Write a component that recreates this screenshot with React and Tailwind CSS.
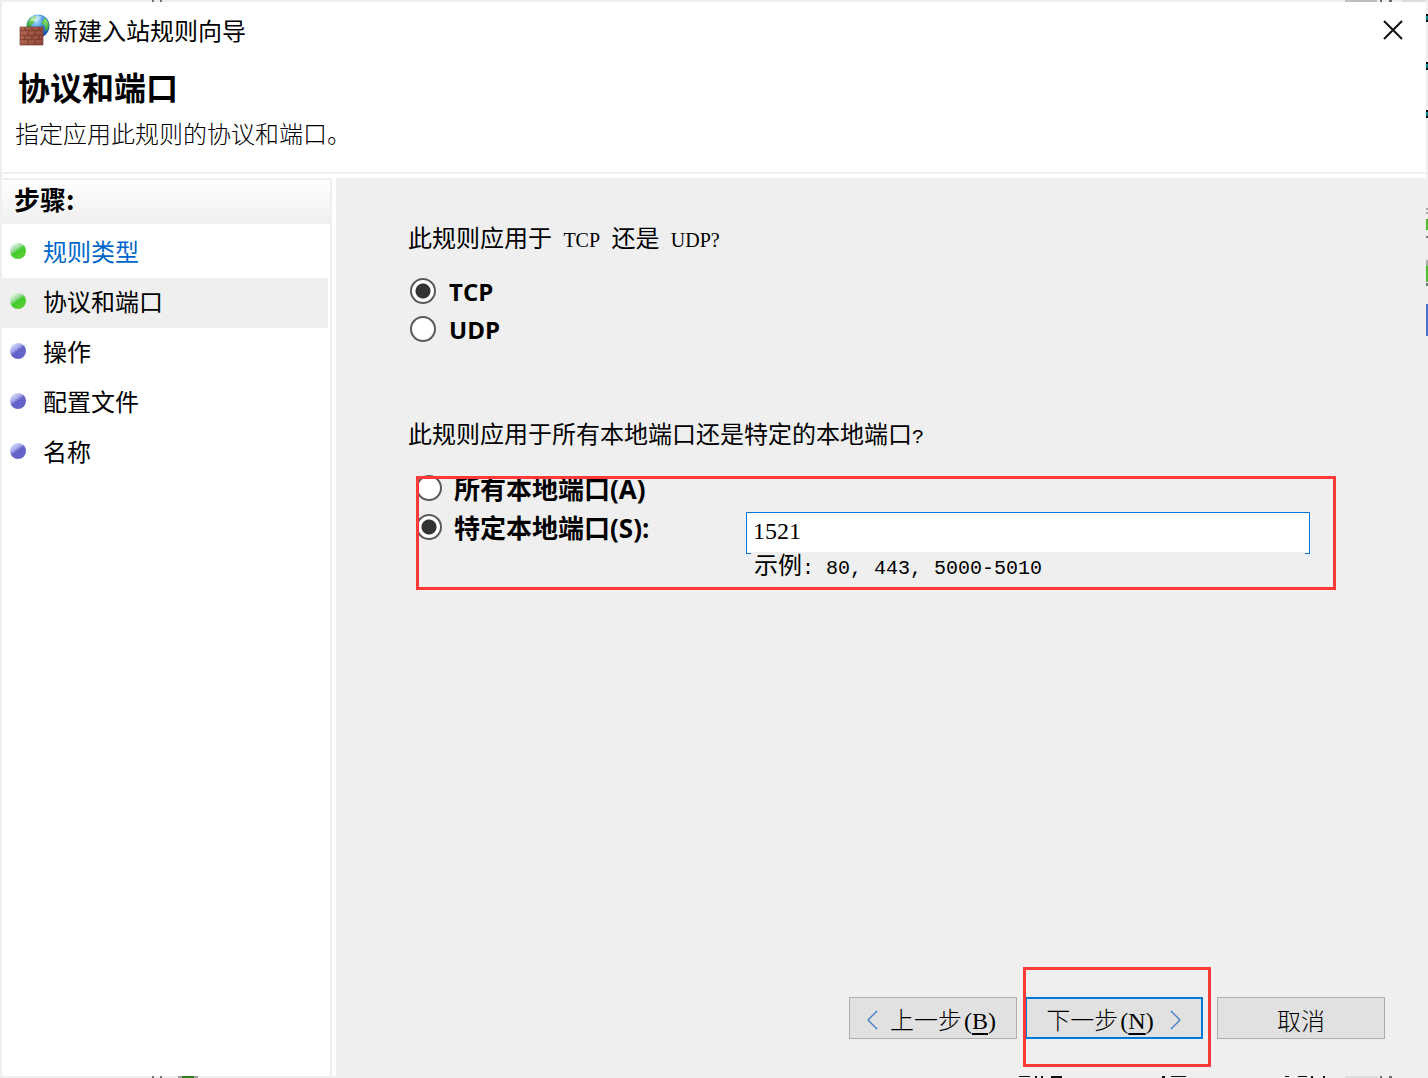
import { useState } from "react";

const steps = [
  { label: "规则类型", done: true, link: true },
  { label: "协议和端口", done: true, active: true },
  { label: "操作" },
  { label: "配置文件" },
  { label: "名称" },
];

const radioClass =
  "size-[26px] shrink-0 appearance-none rounded-full border-2 border-[#5a5a5a] bg-white bg-clip-padding checked:bg-[radial-gradient(circle,#333_0_7px,#fff_8px)]";

function FirewallIcon() {
  return (
    <svg aria-hidden="true" className="size-8 shrink-0" viewBox="0 0 32 32">
      <defs>
        <radialGradient id="globe" cx="0.4" cy="0.25" r="0.8">
          <stop offset="0" stopColor="#c4ecff" />
          <stop offset="0.45" stopColor="#3c93e0" />
          <stop offset="1" stopColor="#1746a0" />
        </radialGradient>
        <radialGradient id="land" cx="0.5" cy="0.3" r="0.8">
          <stop offset="0" stopColor="#8fe070" />
          <stop offset="1" stopColor="#2a9a3a" />
        </radialGradient>
        <linearGradient id="brick" x1="0" x2="1" y1="0" y2="1">
          <stop offset="0" stopColor="#c0705a" />
          <stop offset="1" stopColor="#843a2c" />
        </linearGradient>
      </defs>
      <circle cx="20" cy="12" fill="url(#globe)" r="11.5" />
      <path d="M9 11c0-4 3-8 8-9l2 1-3 3 1 2-3 2-1 3H9z" fill="url(#land)" />
      <path d="M25 3c4 2 6 5 6 9l-2 5-2-1v-4l-3-2 0-3 2-1z" fill="url(#land)" />
      <path d="M14 3c3-2 7-2 10 0-2 3-7 5-11 4z" fill="#fff" opacity="0.4" />
      <path d="M2 13h23v18H2z" fill="#8d4a3c" />
      <g fill="url(#brick)" stroke="#7a3f33" strokeWidth="0.7">
        <path d="M2 13h5v4H2zM7 13h7v4H7zM14 13h7v4h-7zM21 13h4v4h-4z" />
        <path d="M2 17h8v5H2zM10 17h7v5h-7zM17 17h8v5h-8z" />
        <path d="M2 22h5v4H2zM7 22h7v4H7zM14 22h7v4h-7zM21 22h4v4h-4z" />
        <path d="M2 26h8v5H2zM10 26h7v5h-7zM17 26h8v5h-8z" />
      </g>
    </svg>
  );
}

function Bullet({ done }) {
  return (
    <span
      className={
        done
          ? "size-4 rounded-full bg-[linear-gradient(145deg,#f2fff2_5%,#a5dca5_35%,#43cc30_50%,#66cc33_100%)]"
          : "size-4 rounded-full bg-[linear-gradient(145deg,#e0f0ff_5%,#a9a9ea_35%,#6262c6_50%,#6666cc_100%)]"
      }
    />
  );
}

function Chevron({ d }) {
  return (
    <svg aria-hidden="true" className="h-5 w-3 shrink-0" fill="none" stroke="#3a7fc4" strokeWidth="1.3" viewBox="0 0 12 20">
      <path d={d} />
    </svg>
  );
}

// slivers of the window behind the dialog that show past its edge
function EdgeMarks() {
  return (
    <div aria-hidden="true">
      <svg className="absolute -top-0.5 left-0 h-0.5 w-52" viewBox="0 0 208 2">
        <path d="M150 0h2v2h-2zM158 0h2v2h-2z" fill="#777582" />
      </svg>
      <svg className="absolute -top-0.5 right-0 h-0.5 w-24" viewBox="0 0 96 2">
        <path d="M15 0h32v2H15z" fill="#bfbfbf" />
        <path d="M50 0h2v2h-2zM59 0h3v2h-3z" fill="#6b6b6b" />
        <path d="M72 0h24v2H72z" fill="#dedede" />
      </svg>
      <svg className="absolute -right-0.5 top-0 h-[340px] w-0.5" viewBox="0 0 2 340">
        <path d="M0 12h2v8H0zM0 60h2v8H0zM0 108h2v8H0z" fill="#000" />
        <path d="M0 14h2v4H0zM0 62h2v4H0zM0 110h2v4H0z" fill="#008080" />
        <path d="M0 206h2v2H0zM0 210h2v2H0zM0 258h2v6H0z" fill="#aaa" />
        <path d="M0 217h2v11H0zM0 264h2v16H0z" fill="#4dbb32" />
        <path d="M0 234h2v2H0zM0 281h2v3H0z" fill="#777" />
        <path d="M0 302h2v32H0z" fill="#4a74cf" />
      </svg>
      <svg className="absolute -bottom-0.5 left-0 h-0.5 w-52" viewBox="0 0 208 2">
        <path d="M150 0h2v2h-2zM158 0h2v2h-2z" fill="#777582" />
        <path d="M176 0h20v2h-20z" fill="#a0a0a0" />
        <path d="M180 0h12v2h-12z" fill="#2f8020" />
      </svg>
      <svg className="absolute -bottom-0.5 right-0 h-0.5 w-[412px]" viewBox="0 0 412 2">
        <path d="M5 0h11v1H5zM21 0h2v2h-2zM27 0h2v2h-2zM37 0h11v2H37zM148 0h3v2h-3zM157 0h15v1h-15zM271 0h4v1h-4zM284 0h9v1h-9zM297 0h2v2h-2zM309 0h2v2h-2z" fill="#111" />
        <path d="M331 0h33v2h-33z" fill="#dedede" />
        <path d="M366 0h2v2h-2zM375 0h3v2h-3z" fill="#6b6b6b" />
      </svg>
    </div>
  );
}

function Sidebar() {
  return (
    <nav aria-label="步骤" className="mr-1 w-[330px] shrink-0 border-r-2 border-t-2 border-[#efefef] bg-white">
      <h2 className="flex h-11 items-center bg-linear-to-b from-white to-[#efefef] pb-1.5 pl-3 text-[26px] leading-none font-bold">
        步骤:
      </h2>
      <ol className="pt-1">
        {steps.map((step) => (
          <li
            key={step.label}
            className={
              step.active
                ? "mr-0.5 flex h-[50px] items-center gap-[17px] bg-[#efefef] pb-1 pl-2"
                : "mr-0.5 flex h-[50px] items-center gap-[17px] pb-1 pl-2"
            }
          >
            <Bullet done={step.done} />
            {step.link ? (
              <a className="text-[#0066cc]" href="#type">
                {step.label}
              </a>
            ) : (
              <span>{step.label}</span>
            )}
          </li>
        ))}
      </ol>
    </nav>
  );
}

function App() {
  const [protocol, setProtocol] = useState("tcp");
  const [scope, setScope] = useState("specific");
  const [ports, setPorts] = useState("1521");

  return (
    <div className="relative flex min-h-screen flex-col border-2 border-[#efefef] bg-white font-['Noto_Sans_CJK_SC',sans-serif] text-2xl leading-6 text-black">
      <EdgeMarks />

      <header className="border-b-2 border-[#efefef] pb-[27px]">
        <div className="flex h-14 items-center justify-between pr-[21px] pl-4">
          <div className="flex items-center gap-1">
            <FirewallIcon />
            <span>新建入站规则向导</span>
          </div>
          <button aria-label="关闭" type="button">
            <svg className="size-6" fill="none" stroke="#111" strokeWidth="2" viewBox="0 0 24 24">
              <path d="M3 3l18 18M21 3L3 21" />
            </svg>
          </button>
        </div>
        <h1 className="pt-2.5 pl-4 text-[32px] leading-9 font-bold">协议和端口</h1>
        <p className="mt-[17px] pl-[13px] font-light">指定应用此规则的协议和端口。</p>
      </header>

      <div className="flex flex-1 pt-1">
        <Sidebar />

        <main className="flex min-w-0 flex-1 flex-col bg-[#efefef] pt-[47px] pb-[37px]">
          <fieldset className="pl-[72px]">
            <legend className="mb-[22px]">
              此规则应用于 <span className="mx-1.5 font-['Liberation_Serif',serif] text-xl leading-none">TCP</span> 还是{" "}
              <span className="ml-1.5 font-['Liberation_Serif',serif] text-xl leading-none">UDP?</span>
            </legend>
            {["tcp", "udp"].map((name) => (
              <label key={name} className="flex h-[38px] items-center gap-[13px] pl-0.5 font-['Open_Sans',sans-serif] font-bold">
                <input
                  checked={protocol === name}
                  className={radioClass}
                  name="protocol"
                  onChange={() => setProtocol(name)}
                  type="radio"
                />
                <span className="pt-0.5">{name.toUpperCase()}</span>
              </label>
            ))}
          </fieldset>

          <p id="scope-question" className="mt-[73px] pl-[72px]">
            此规则应用于所有本地端口还是特定的本地端口
            <span className="font-['Liberation_Mono',monospace] text-xl leading-none">?</span>
          </p>

          <div
            aria-labelledby="scope-question"
            className="relative mt-[26px] mr-[90px] ml-20 grid grid-cols-[330px_minmax(0,1fr)] gap-y-2.5 pr-[26px] pb-[11px]"
            role="radiogroup"
          >
            <label className="col-span-2 flex h-7 items-center gap-3 font-['Open_Sans','Noto_Sans_CJK_SC',sans-serif] text-[26px] leading-none font-bold">
              <input
                checked={scope === "all"}
                className={radioClass}
                name="scope"
                onChange={() => setScope("all")}
                type="radio"
              />
              <span className="pt-0.5">所有本地端口(A)</span>
            </label>
            <label className="flex h-[30px] items-center gap-3 font-['Open_Sans','Noto_Sans_CJK_SC',sans-serif] text-[26px] leading-none font-bold">
              <input
                checked={scope === "specific"}
                className={radioClass}
                name="scope"
                onChange={() => setScope("specific")}
                type="radio"
              />
              <span className="pt-0.5">特定本地端口(S):</span>
            </label>
            <div>
              <input
                aria-label="特定本地端口"
                className="block h-[42px] w-full border border-[#0078d7] bg-white px-1.5 pb-1 font-['Liberation_Serif',serif] text-2xl outline-none"
                onChange={(e) => setPorts(e.target.value)}
                type="text"
                value={ports}
              />
              <p className="relative mx-[5px] -mt-0.5 bg-[#efefef] pl-[3px]">
                示例
                <span className="font-['Liberation_Mono',monospace] text-xl leading-none">: 80, 443, 5000-5010</span>
              </p>
            </div>
            <div className="pointer-events-none absolute inset-x-0 top-0.5 bottom-0 border-3 border-[#ff3838]" />
          </div>

          <div className="mt-auto flex justify-end gap-2 pr-[41px] font-light">
            <button
              className="flex h-[42px] w-[168px] items-center justify-center gap-3 border border-[#adadad] bg-[#e1e1e1] pt-1 pr-1"
              type="button"
            >
              <Chevron d="M11 1L2 10l9 9" />
              <span>
                上一步
                <span className="ml-0.5 font-['Liberation_Serif',serif] leading-none">
                  (<u className="underline-offset-4">B</u>)
                </span>
              </span>
            </button>
            <div className="relative mr-1.5">
              <button
                className="flex h-[42px] w-[178px] items-center justify-center gap-4 border-2 border-[#0078d7] bg-[#e1e1e1] pt-1"
                type="button"
              >
                <span>
                  下一步
                  <span className="ml-0.5 font-['Liberation_Serif',serif] leading-none">
                    (<u className="underline-offset-4">N</u>)
                  </span>
                </span>
                <Chevron d="M1 1l9 9-9 9" />
              </button>
              <div className="pointer-events-none absolute -top-[30px] -right-2 -bottom-7 -left-0.5 border-3 border-[#ff3838]" />
            </div>
            <button className="h-[42px] w-[168px] border border-[#adadad] bg-[#e1e1e1] pt-1" type="button">
              取消
            </button>
          </div>
        </main>
      </div>
    </div>
  );
}

export default App;
